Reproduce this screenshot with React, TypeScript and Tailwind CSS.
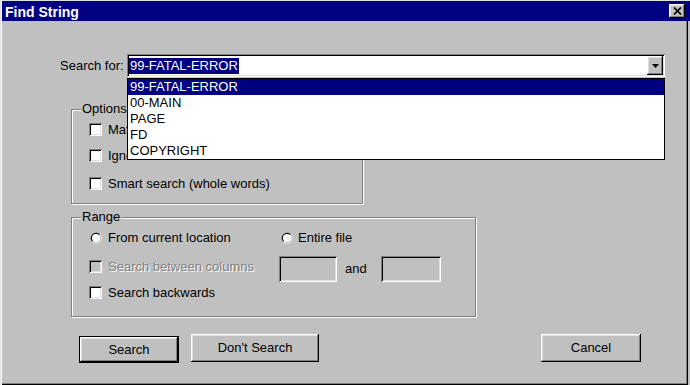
import React from "react";

const raised =
  "shadow-[inset_-1px_-1px_0_#000,inset_1px_1px_0_#fff,inset_-2px_-2px_0_#808080,inset_2px_2px_0_#dfdfdf]";
const sunken =
  "shadow-[inset_1px_1px_0_#808080,inset_-1px_-1px_0_#fff,inset_2px_2px_0_#000,inset_-2px_-2px_0_#dfdfdf]";

function Checkbox({ disabled = false }: { disabled?: boolean }) {
  return (
    <div
      className={`w-[13px] h-[13px] shrink-0 ${sunken} ${disabled ? "bg-[#c0c0c0]" : "bg-white"}`}
    />
  );
}

function Radio() {
  return (
    <svg width="12" height="12" viewBox="0 0 12 12" className="shrink-0">
      <circle cx="6" cy="6" r="6" fill="#dfdfdf" />
      <path d="M10.24 1.76 A6 6 0 0 0 1.76 10.24 Z" fill="#808080" />
      <circle cx="6" cy="6" r="5" fill="#c0c0c0" />
      <path d="M9.54 2.46 A5 5 0 0 0 2.46 9.54 Z" fill="#000" />
      <circle cx="6" cy="6" r="4" fill="#ffffff" />
    </svg>
  );
}

const items = ["99-FATAL-ERROR", "00-MAIN", "PAGE", "FD", "COPYRIGHT"];

export default function App() {
  return (
    <div className="w-[690px] h-[385px] bg-[#c0c0c0] flex flex-col pl-[2px] pt-[1px] overflow-hidden shadow-[inset_1px_1px_0_#dfdfdf,inset_2px_2px_0_#fff] font-['Liberation_Sans',Arial,sans-serif] text-[13px] leading-[16px] text-black">
      {/* Title bar */}
      <div className="h-[20px] bg-[#000080] flex items-center justify-between pl-[3px] pr-[5px] shrink-0">
        <span className="text-white font-bold text-[14px] leading-[20px] pt-[1px]">Find String</span>
        <div className={`w-[16px] h-[14px] bg-[#c0c0c0] ${raised} flex items-center justify-center`}>
          <svg width="9" height="8" viewBox="0 0 9 8">
            <path d="M1 0.5 L8 7.5 M8 0.5 L1 7.5" stroke="#000" strokeWidth="1.7" />
          </svg>
        </div>
      </div>

      {/* Body */}
      <div className="flex-1 mr-[2px] flex flex-col shadow-[inset_-1px_-1px_0_#000,inset_-2px_-2px_0_#808080]">
        {/* Search for row */}
        <div className="mt-[33px] pl-[58px] flex items-center h-[23px]">
          <span className="w-[67px] shrink-0">Search for:</span>
          <div className="relative">
            <div className={`w-[538px] h-[23px] bg-white ${sunken} flex items-center pl-[2px] pr-[2px]`}>
              <div className="flex-1 flex items-center">
                <span className="bg-[#000080] text-white px-[1px] leading-[16px]">99-FATAL-ERROR</span>
              </div>
              <div className={`w-[16px] h-[19px] bg-[#c0c0c0] ${raised} flex items-center justify-center`}>
                <svg width="7" height="4" viewBox="0 0 7 4">
                  <polygon points="0,0 7,0 3.5,4" fill="#000" />
                </svg>
              </div>
            </div>
            {/* Dropdown list */}
            <div className="absolute left-0 top-full mt-[1px] z-10 w-[538px] bg-white border border-black">
              {items.map((it, i) => (
                <div
                  key={it}
                  className={`h-[16px] leading-[16px] pl-[2px] ${i === 0 ? "bg-[#000080] text-white" : ""}`}
                >
                  {it}
                </div>
              ))}
            </div>
          </div>
        </div>

        {/* Options group */}
        <fieldset className="mt-[24px] ml-[69px] w-[292px] h-[103px] border border-[#808080] shadow-[inset_1px_1px_0_#fff,1px_1px_0_#fff]">
          <legend className="ml-[9px] px-[1px] bg-[#c0c0c0] leading-[16px]">Options</legend>
          <div className="mt-[6px] pl-[17px] h-[13px] flex items-center gap-[6px]">
            <Checkbox />
            <span className="max-w-[19px] overflow-hidden whitespace-nowrap">Match case</span>
          </div>
          <div className="mt-[13px] pl-[17px] h-[13px] flex items-center gap-[6px]">
            <Checkbox />
            <span className="max-w-[19px] overflow-hidden whitespace-nowrap">Ignore case</span>
          </div>
          <div className="mt-[15px] pl-[17px] h-[13px] flex items-center gap-[6px]">
            <Checkbox />
            <span>Smart search (whole words)</span>
          </div>
        </fieldset>

        {/* Range group */}
        <fieldset className="mt-[5px] ml-[69px] w-[405px] h-[108px] border border-[#808080] shadow-[inset_1px_1px_0_#fff,1px_1px_0_#fff]">
          <legend className="ml-[9px] px-[1px] bg-[#c0c0c0] leading-[16px]">Range</legend>
          <div className="mt-[7px] pl-[18px] h-[12px] flex items-center">
            <div className="w-[191px] flex items-center gap-[6px]">
              <Radio />
              <span>From current location</span>
            </div>
            <div className="flex items-center gap-[5px]">
              <Radio />
              <span>Entire file</span>
            </div>
          </div>
          <div className="mt-[12px] pl-[17px] h-[26px] flex items-start">
            <div className="w-[190px] mt-[4px] h-[13px] flex items-center gap-[6px]">
              <Checkbox disabled />
              <span className="text-[#808080] [text-shadow:1px_1px_0_#fff]">Search between columns</span>
            </div>
            <div className={`w-[58px] h-[26px] bg-[#c0c0c0] ${sunken}`} />
            <span className="ml-[8px] w-[36px] self-center">and</span>
            <div className={`w-[60px] h-[26px] bg-[#c0c0c0] ${sunken}`} />
          </div>
          <div className="mt-[4px] pl-[17px] h-[13px] flex items-center gap-[6px]">
            <Checkbox />
            <span>Search backwards</span>
          </div>
        </fieldset>

        {/* Buttons */}
        <div className="mt-[17px] pl-[77px] flex items-start">
          <div className="mt-[2px] w-[100px] h-[27px] border border-black">
            <div className={`w-full h-full ${raised} flex items-center justify-center`}>Search</div>
          </div>
          <div className={`ml-[12px] w-[128px] h-[28px] ${raised} flex items-center justify-center`}>
            Don't Search
          </div>
          <div className={`ml-[222px] w-[100px] h-[28px] ${raised} flex items-center justify-center`}>
            Cancel
          </div>
        </div>
      </div>
    </div>
  );
}
